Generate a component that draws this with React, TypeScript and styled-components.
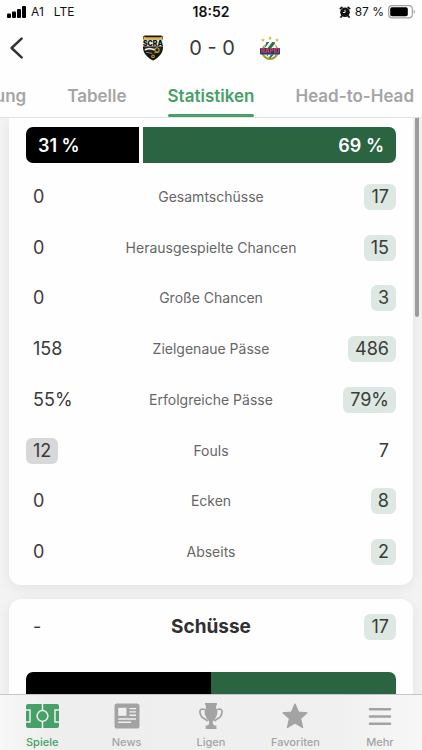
import React from "react";
import styled, { createGlobalStyle, css } from "styled-components";

const GlobalStyle = createGlobalStyle`
  *, *::before, *::after { box-sizing: border-box; }
  body {
    margin: 0;
    background: #f3f3f3;
    color: #3a3a3a;
    font-family: Inter, "Liberation Sans", sans-serif;
  }
  button { font: inherit; border: 0; padding: 0; background: none; color: inherit; cursor: pointer; }
  h2, ul { margin: 0; padding: 0; list-style: none; }
`;

const HOME = "#000000";
const AWAY = "#2a6441";
const ACCENT = "#46a067";

const Screen = styled.div`
  display: flex;
  flex-direction: column;
  height: 100vh;
  overflow: hidden;
`;

const Top = styled.header`
  flex: none;
  background: #fefefe;
  border-bottom: 1px solid #e2e2e2;
`;

const StatusBar = styled.div`
  display: grid;
  grid-template-columns: 1fr auto 1fr;
  align-items: center;
  height: 24px;
  padding: 0 7px;
  color: #111;
  font-size: 12px;
  line-height: 16px;
`;

const StatusGroup = styled.div<{ $end?: boolean }>`
  display: flex;
  align-items: center;
  justify-content: ${(p) => (p.$end ? "flex-end" : "flex-start")};
  gap: ${(p) => (p.$end ? "4px" : "5px")};
`;

const Network = styled.span`
  margin-left: 5px;
`;

const Clock = styled.time`
  font-size: 14px;
  font-weight: 600;
`;

const MatchHeader = styled.div`
  display: grid;
  grid-template-columns: 1fr auto 1fr;
  align-items: center;
  height: 48px;
  padding: 0 9px;
`;

const BackButton = styled.button`
  display: flex;
  justify-self: start;
`;

const Match = styled.div`
  display: flex;
  align-items: center;
  gap: 25px;
`;

const Score = styled.span`
  font-size: 20px;
  line-height: 24px;
  white-space: nowrap;
`;

const Tabs = styled.nav`
  display: flex;
  justify-content: flex-end;
  gap: 41px;
  height: 45px;
  padding-right: 8px;
  overflow: hidden;
`;

const Tab = styled.button<{ $active?: boolean }>`
  position: relative;
  flex: none;
  font-size: 17px;
  line-height: 24px;
  font-weight: 600;
  padding-top: 2px;
  color: ${(p) => (p.$active ? ACCENT : "#a5a5a5")};

  &::after {
    content: "";
    position: absolute;
    left: 0;
    right: 0;
    bottom: 0;
    height: 3px;
    border-radius: 2px;
    background: ${(p) => (p.$active ? ACCENT : "transparent")};
  }
`;

const Content = styled.main`
  position: relative;
  flex: 1;
  min-height: 0;
  overflow: hidden;
  display: flex;
  flex-direction: column;
  gap: 14px;
  padding: 0 9px;
`;

const ScrollThumb = styled.div`
  position: absolute;
  top: 0;
  right: 3px;
  width: 4px;
  height: 199px;
  border-radius: 0 0 2px 2px;
  background: #9b9b9b;
`;

const Card = styled.section<{ $continued?: boolean }>`
  flex: none;
  background: #fefefe;
  border-radius: ${(p) => (p.$continued ? "0 0 12px 12px" : "12px")};
  padding: ${(p) => (p.$continued ? "9px 17px 20px" : "15px 17px 20px")};
  box-shadow: 0 3px 14px rgba(0, 0, 0, 0.07);
`;

const Split = styled.div<{ $gap?: boolean }>`
  display: flex;
  gap: ${(p) => (p.$gap ? "4px" : "0")};
  height: 36px;
  border-radius: 7px;
  overflow: hidden;
`;

const Share = styled.div<{ $color: string; $end?: boolean }>`
  display: flex;
  align-items: center;
  justify-content: ${(p) => (p.$end ? "flex-end" : "flex-start")};
  background: ${(p) => p.$color};
`;

const ShareText = styled.span`
  margin: 0 12px;
  color: #fff;
  font-size: 18px;
  font-weight: 600;
  white-space: nowrap;
`;

const StatList = styled.ul`
  display: flex;
  flex-direction: column;
  justify-content: space-between;
  min-height: 381px;
  margin-top: 21px;
`;

const rowGrid = css`
  display: grid;
  grid-template-columns: 1fr auto 1fr;
  align-items: center;
`;

const StatRow = styled.li`
  ${rowGrid}
`;

const CardHead = styled.div`
  ${rowGrid}
  margin-bottom: 32px;
`;

const Label = styled.span`
  font-size: 14px;
  line-height: 20px;
  color: #666;
`;

const CardTitle = styled.h2`
  font-size: 19px;
  line-height: 26px;
  font-weight: 700;
  color: #303030;
`;

const Value = styled.span<{ $end?: boolean; $lead?: boolean }>`
  justify-self: ${(p) => (p.$end ? "end" : "start")};
  padding: 0 7px;
  border-radius: 6px;
  font-size: 18px;
  line-height: 26px;
  background: ${(p) => (p.$lead ? (p.$end ? "#dde8e2" : "#d8d8d8") : "transparent")};
`;

const BottomBar = styled.nav`
  flex: none;
  display: flex;
  height: 56px;
  border-top: 1px solid #c6c6c6;
  background: linear-gradient(90deg, #f7f7f7, #eeeeee 12%, #f0f0f0 80%, #f7f7f7);
`;

const BottomItem = styled.button<{ $active?: boolean }>`
  flex: 1;
  display: flex;
  flex-direction: column;
  align-items: center;
  gap: 5px;
  padding-top: 8px;
  font-size: 11px;
  line-height: 16px;
  font-weight: 500;
  color: ${(p) => (p.$active ? ACCENT : "#a3a3a3")};
`;

const SignalIcon = () => (
  <svg width="19" height="12" viewBox="0 0 19 12" fill="#000" aria-hidden="true">
    <rect x="0" y="7.5" width="4" height="4.5" rx="1" />
    <rect x="5" y="5.5" width="4" height="6.5" rx="1" />
    <rect x="10" y="3" width="4" height="9" rx="1" />
    <rect x="15" y="0" width="4" height="12" rx="1" />
  </svg>
);

const AlarmIcon = () => (
  <svg width="12" height="12" viewBox="0 0 12 12" aria-hidden="true">
    <circle cx="6" cy="6.3" r="4.8" fill="#111" />
    <path d="M1.4 2.6 L2.8 1.4 M10.6 2.6 L9.2 1.4 M2.8 10 L2 11 M9.2 10 L10 11" stroke="#111" strokeWidth="1.8" strokeLinecap="round" />
    <path d="M6 3.8 V6.5 H4" stroke="#fff" strokeWidth=".9" fill="none" />
  </svg>
);

const BatteryIcon = () => (
  <svg width="27" height="14" viewBox="0 0 27 14" aria-hidden="true">
    <rect x="0.7" y="0.7" width="23.6" height="12.2" rx="3.4" fill="#fff" stroke="#a2a2a2" strokeWidth="1.2" />
    <rect x="2.2" y="2.3" width="17.6" height="9" rx="1.8" fill="#000" />
    <path d="M25.6 4.8 Q27 5.4 27 6.8 Q27 8.2 25.6 8.8Z" fill="#a2a2a2" />
  </svg>
);

const BackIcon = () => (
  <svg width="15" height="22" viewBox="0 0 15 22" aria-hidden="true">
    <path d="M12.6 1.6 L2.6 11 L12.6 20.4" fill="none" stroke="#333" strokeWidth="2.5" strokeLinecap="round" strokeLinejoin="round" />
  </svg>
);

const HomeCrest = () => (
  <svg width="22" height="26" viewBox="0 0 22 26" role="img" aria-label="SCRA">
    <path d="M1.2 1.2 L3 .5 H19 L20.8 1.2 L21 13 C20.6 18.6 16.5 22.6 11 25.6 C5.5 22.6 1.4 18.6 1 13Z" fill="#17140f" />
    <path d="M1.6 1.4 L4 2.2 H18 L20.4 1.4 V4.4 H1.6Z" fill="#e2b52c" />
    <rect x="0.8" y="4.4" width="20.4" height="7" fill="#f5f3ec" />
    <text x="11" y="10.6" textAnchor="middle" fontFamily="Inter, sans-serif" fontSize="7" fontWeight="900" fill="#111">SCRA</text>
    <path d="M2 12 H20 L19.4 15.2 L14 17.6 L8 17 L2.6 15.2Z" fill="#2b261c" />
    <path d="M3 15 Q6 12.7 10 14 T15 13.8" stroke="#f0eee7" strokeWidth="1.7" fill="none" />
    <circle cx="15" cy="15" r="2.2" fill="#242018" stroke="#dfb73a" strokeWidth="1" />
    <path d="M4 17.3 L10.3 18.4 M12 18 L17.5 17" stroke="#b4aa89" strokeWidth=".8" />
    <circle cx="11" cy="21.4" r="1.8" fill="#c49d2e" />
    <path d="M9.8 21 L11 20.4 L12.2 21.2 L11 22.4Z" fill="#38301b" />
  </svg>
);

const Star = ({ x, y }: { x: number; y: number }) => (
  <path transform={`translate(${x} ${y})`} d="M0-2 .6-.6 2-.5 .9.4 1.2 1.8 0 1-1.2 1.8-.9.4-2-.5-.6-.6Z" fill="#d9b83a" />
);

const AwayCrest = () => (
  <svg width="20" height="25" viewBox="0 0 20 25" role="img" aria-label="Rapid">
    <Star x={3} y={4} />
    <Star x={10} y={2.2} />
    <Star x={17} y={4} />
    <circle cx="10" cy="15.4" r="7.6" fill="#f5f5ec" stroke="#a49a31" strokeWidth="2" />
    <path d="M5.5 5.8 H14.5 L16 12 H4Z" fill="#f8faf7" />
    <path d="M6.5 6 H9.4 L4.8 12 H4.3Z M12.2 6 H14.5 L15 7.8 L11.4 12 H7.7Z" fill="#28764c" />
    <path d="M6 18.5 H14 L10 22.4Z" fill="#28764c" />
    <path d="M8.2 18.5 H11 L9 21.3 L7.8 20.3Z" fill="#fff" />
    <rect x="0" y="12" width="20" height="6.4" rx=".6" fill="#1c3c86" />
    <text x="10" y="17.2" textAnchor="middle" fontFamily="Inter, sans-serif" fontSize="6" fontWeight="700" fill="#f03a2c">RAPID</text>
  </svg>
);

const PitchIcon = () => (
  <svg width="33" height="26" viewBox="0 0 33 26" aria-hidden="true">
    <rect x="0" y="1" width="33" height="24" rx="2" fill={ACCENT} />
    <g fill="none" stroke="#f0f0f0" strokeWidth="1.5">
      <path d="M16.5 1 V7.6 M16.5 18.4 V25" />
      <circle cx="16.5" cy="13" r="5.4" />
      <path d="M0 7 H4 V19 H0 M33 7 H29 V19 H33" />
    </g>
  </svg>
);

const NewsIcon = () => (
  <svg width="26" height="26" viewBox="0 0 26 26" aria-hidden="true">
    <rect x=".5" y=".5" width="25" height="25" rx="2.6" fill="#a3a3a3" />
    <rect x="4.2" y="4.8" width="8.2" height="8" fill="#f0f0f0" />
    <path d="M15.5 5.6 H22 M15.5 8.9 H22 M15.5 12.2 H22 M4.2 16 H22 M4.2 19.2 H17" stroke="#f0f0f0" strokeWidth="1.4" />
  </svg>
);

const TrophyIcon = () => (
  <svg width="26" height="26" viewBox="0 0 26 26" aria-hidden="true">
    <path d="M7 0 H19 V1.6 Q17.9 2.4 18 4.6 Q18.2 6.6 19.4 8 Q19.8 13.6 14.8 18.4 V20.6 Q15 21.9 16.6 22.4 H18.4 V26 H7.6 V22.4 H9.4 Q11 21.9 11.2 20.6 V18.4 Q6.2 13.6 6.6 8 Q7.8 6.6 8 4.6 Q8.1 2.4 7 1.6Z" fill="#a3a3a3" />
    <path d="M8.4 7.6 Q6.6 6 4.2 6 Q1.5 6.4 2 9.6 Q2.6 13.6 5.6 15.2 Q7.8 16.4 9.6 18 M17.6 7.6 Q19.4 6 21.8 6 Q24.5 6.4 24 9.6 Q23.4 13.6 20.4 15.2 Q18.2 16.4 16.4 18" stroke="#a3a3a3" strokeWidth="1.7" fill="none" />
  </svg>
);

const StarIcon = () => (
  <svg width="26" height="26" viewBox="0 0 26 26" aria-hidden="true">
    <path d="M13 1 L16.5 9 L25 9.8 L18.6 15.6 L20.6 24.6 L13 20 L5.4 24.6 L7.4 15.6 L1 9.8 L9.5 9Z" fill="#a3a3a3" stroke="#a3a3a3" strokeWidth="1.2" strokeLinejoin="round" />
  </svg>
);

const MenuIcon = () => (
  <svg width="26" height="26" viewBox="0 0 26 26" aria-hidden="true">
    <path d="M3 6.2 H23 M3 13.5 H23 M3 20.8 H23" stroke="#a3a3a3" strokeWidth="2.6" strokeLinecap="round" />
  </svg>
);

type Stat = { label: string; home: string; away: string; lead: "home" | "away" };

const stats: Stat[] = [
  { label: "Gesamtschüsse", home: "0", away: "17", lead: "away" },
  { label: "Herausgespielte Chancen", home: "0", away: "15", lead: "away" },
  { label: "Große Chancen", home: "0", away: "3", lead: "away" },
  { label: "Zielgenaue Pässe", home: "158", away: "486", lead: "away" },
  { label: "Erfolgreiche Pässe", home: "55%", away: "79%", lead: "away" },
  { label: "Fouls", home: "12", away: "7", lead: "home" },
  { label: "Ecken", home: "0", away: "8", lead: "away" },
  { label: "Abseits", home: "0", away: "2", lead: "away" },
];

const tabs = ["Aufstellung", "Tabelle", "Statistiken", "Head-to-Head"];

const sections = [
  { label: "Spiele", Icon: PitchIcon },
  { label: "News", Icon: NewsIcon },
  { label: "Ligen", Icon: TrophyIcon },
  { label: "Favoriten", Icon: StarIcon },
  { label: "Mehr", Icon: MenuIcon },
];

export default function App() {
  return (
    <Screen>
      <GlobalStyle />
      <Top>
        <StatusBar>
          <StatusGroup>
            <SignalIcon />
            <span>A1</span>
            <Network>LTE</Network>
          </StatusGroup>
          <Clock>18:52</Clock>
          <StatusGroup $end>
            <AlarmIcon />
            <span>87 %</span>
            <BatteryIcon />
          </StatusGroup>
        </StatusBar>
        <MatchHeader>
          <BackButton aria-label="Zurück">
            <BackIcon />
          </BackButton>
          <Match>
            <HomeCrest />
            <Score>0 - 0</Score>
            <AwayCrest />
          </Match>
        </MatchHeader>
        <Tabs>
          {tabs.map((t) => (
            <Tab key={t} $active={t === "Statistiken"}>
              {t}
            </Tab>
          ))}
        </Tabs>
      </Top>
      <Content>
        <Card $continued>
          <Split $gap>
            <Share $color={HOME} style={{ flex: "31 1 0" }}>
              <ShareText>31 %</ShareText>
            </Share>
            <Share $color={AWAY} $end style={{ flex: "69 1 0" }}>
              <ShareText>69 %</ShareText>
            </Share>
          </Split>
          <StatList>
            {stats.map((s) => (
              <StatRow key={s.label}>
                <Value $lead={s.lead === "home"}>{s.home}</Value>
                <Label>{s.label}</Label>
                <Value $end $lead={s.lead === "away"}>
                  {s.away}
                </Value>
              </StatRow>
            ))}
          </StatList>
        </Card>
        <Card>
          <CardHead>
            <Value>-</Value>
            <CardTitle>Schüsse</CardTitle>
            <Value $end $lead>
              17
            </Value>
          </CardHead>
          <Split>
            <Share $color={HOME} style={{ flex: "1 1 0" }} />
            <Share $color={AWAY} style={{ flex: "1 1 0" }} />
          </Split>
        </Card>
        <ScrollThumb />
      </Content>
      <BottomBar>
        {sections.map(({ label, Icon }) => (
          <BottomItem key={label} $active={label === "Spiele"}>
            <Icon />
            {label}
          </BottomItem>
        ))}
      </BottomBar>
    </Screen>
  );
}
